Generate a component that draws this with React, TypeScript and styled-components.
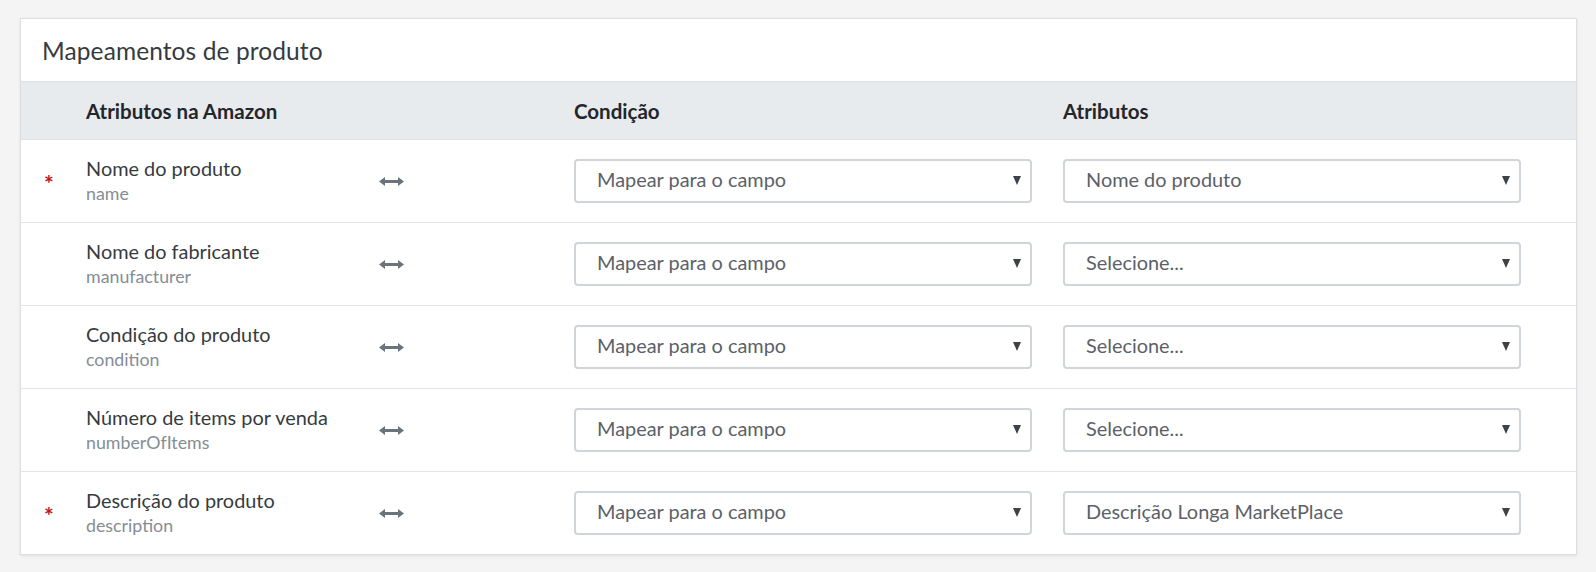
import React from "react";
import styled, { createGlobalStyle } from "styled-components";

const GlobalStyle = createGlobalStyle`
  html, body {
    margin: 0;
    padding: 0;
    background: #f4f4f4;
  }
  body {
    font-family: Lato, "Noto Sans", "Liberation Sans", sans-serif;
    -webkit-font-smoothing: antialiased;
  }
`;

const Page = styled.div`
  padding: 18px 19px 18px 20px;
`;

const Card = styled.section`
  background: #fff;
  border: 1px solid #dcdfe2;
  box-shadow: 0 1px 3px rgba(0, 0, 0, 0.08);
`;

const Title = styled.h2`
  margin: 0;
  height: 62px;
  display: flex;
  align-items: center;
  padding: 0 21px;
  font-size: 24.5px;
  font-weight: 400;
  color: #363b40;
  letter-spacing: 0.1px;
`;

const Grid = styled.div`
  display: grid;
  grid-template-columns: 65px 293px 195px 489px 458px 1fr;
  align-items: center;
`;

const HeaderRow = styled(Grid)`
  height: 57px;
  background: #e8ebee;
  border-top: 1px solid #dde1e5;
  border-bottom: 1px solid #dde1e5;
`;

const HeadCell = styled.div<{ $col: number }>`
  grid-column: ${(p) => p.$col};
  font-size: 20.5px;
  font-weight: 700;
  color: #23272b;
`;

const Row = styled(Grid)`
  height: 82px;
  border-bottom: 1px solid #e1e4e8;
  &:last-child {
    border-bottom: none;
  }
`;

const Star = styled.span`
  justify-self: center;
  color: #c4121d;
  font-size: 23px;
  font-weight: 700;
  line-height: 1;
  margin-top: 4px;
  margin-left: -9px;
`;

const Label = styled.div`
  display: flex;
  flex-direction: column;
  gap: 2px;
  margin-top: -3px;
`;

const Name = styled.span`
  font-size: 19.9px;
  line-height: 24px;
  color: #363b40;
`;

const Key = styled.span`
  font-size: 17.8px;
  line-height: 22px;
  color: #858d95;
`;

const ArrowBox = styled.div`
  display: flex;
  align-items: center;
  margin-top: 1px;
`;

const SelectBox = styled.div<{ $inset?: boolean }>`
  box-sizing: border-box;
  height: 44px;
  margin-top: -1px;
  width: ${(p) => (p.$inset ? "calc(100% - 31px)" : "100%")};
  border: 2px solid #d0d5da;
  border-radius: 4px;
  background: #fff;
  display: flex;
  align-items: center;
  justify-content: space-between;
  padding: 0 9px 0 21px;
`;

const SelectText = styled.span`
  font-size: 19.9px;
  line-height: 24px;
  color: #5b6168;
  margin-top: -3px;
`;

const Caret = styled.span`
  width: 0;
  height: 0;
  border-left: 4.5px solid transparent;
  border-right: 4.5px solid transparent;
  border-top: 9px solid #3e4247;
`;

const SwapIcon = () => (
  <svg width="25" height="9" viewBox="0 0 25 9" fill="#6b737b">
    <rect x="5" y="3" width="15" height="3" />
    <polygon points="0,4.5 6,0 6,9" />
    <polygon points="25,4.5 19,0 19,9" />
  </svg>
);

type Mapping = {
  name: string;
  key: string;
  required: boolean;
  attr: string;
};

const rows: Mapping[] = [
  { name: "Nome do produto", key: "name", required: true, attr: "Nome do produto" },
  { name: "Nome do fabricante", key: "manufacturer", required: false, attr: "Selecione..." },
  { name: "Condição do produto", key: "condition", required: false, attr: "Selecione..." },
  { name: "Número de items por venda", key: "numberOfItems", required: false, attr: "Selecione..." },
  { name: "Descrição do produto", key: "description", required: true, attr: "Descrição Longa MarketPlace" },
];

const Select = ({ value, inset }: { value: string; inset?: boolean }) => (
  <SelectBox $inset={inset}>
    <SelectText>{value}</SelectText>
    <Caret />
  </SelectBox>
);

export default function App() {
  return (
    <>
      <GlobalStyle />
      <Page>
        <Card>
          <Title>Mapeamentos de produto</Title>
          <HeaderRow>
            <HeadCell $col={2}>Atributos na Amazon</HeadCell>
            <HeadCell $col={4}>Condição</HeadCell>
            <HeadCell $col={5}>Atributos</HeadCell>
          </HeaderRow>
          {rows.map((r) => (
            <Row key={r.key}>
              {r.required ? <Star>*</Star> : <span />}
              <Label>
                <Name>{r.name}</Name>
                <Key>{r.key}</Key>
              </Label>
              <ArrowBox>
                <SwapIcon />
              </ArrowBox>
              <Select value="Mapear para o campo" inset />
              <Select value={r.attr} />
              <span />
            </Row>
          ))}
        </Card>
      </Page>
    </>
  );
}
